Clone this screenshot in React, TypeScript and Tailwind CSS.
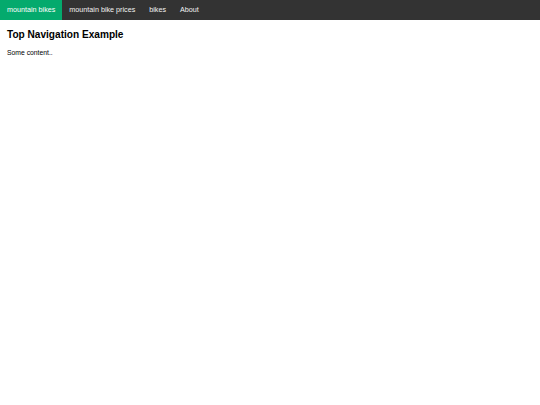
export default function App() {
  const links = ["mountain bikes", "mountain bike prices", "bikes", "About"];
  return (
    <div className="min-h-screen bg-white font-['Liberation_Sans',Arial,sans-serif]">
      <nav className="flex h-[20px] bg-[#333333]">
        {links.map((label, i) => (
          <a
            key={label}
            href="#"
            className={
              i === 0
                ? "block bg-[#04AA6D] px-[7px] text-[7.2px] leading-[20px] text-white"
                : "block px-[7px] text-[7.2px] leading-[20px] text-[#f2f2f2]"
            }
          >
            {label}
          </a>
        ))}
      </nav>
      <div className="px-[7px]">
        <h2 className="mt-[9px] text-[10.1px] font-bold leading-[12px] text-black">
          Top Navigation Example
        </h2>
        <p className="mt-[8px] text-[6.8px] leading-[8px] text-black">Some content..</p>
      </div>
    </div>
  );
}
